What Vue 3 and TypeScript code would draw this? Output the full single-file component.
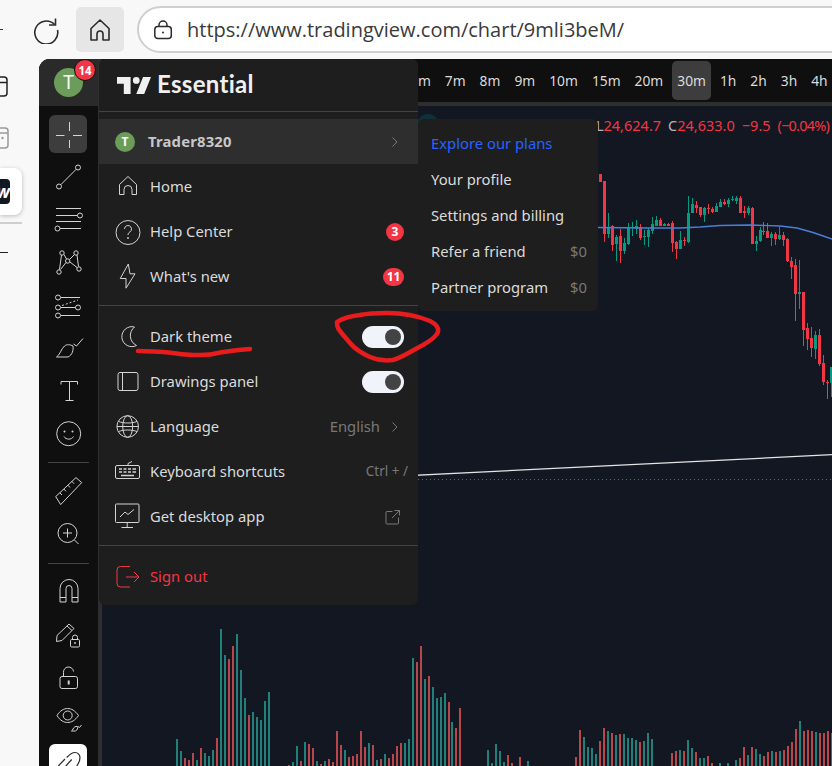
<template>
  <div class="page">
    <!-- Browser bar -->
    <header class="browser-bar">
      <span class="edge-mark"></span>
      <svg class="refresh" width="28" height="28" viewBox="0 0 28 28" fill="none" stroke="#2b2b2b" stroke-width="1.6">
        <path d="M22.500 8.500A11.500 11.500 0 1 0 25.500 14" />
        <path d="M23.500 2.500v6.500H17" />
      </svg>
      <button class="home-btn">
        <svg width="24" height="24" viewBox="0 0 24 24" fill="none" stroke="#2b2b2b" stroke-width="1.6" stroke-linejoin="round">
          <path d="M3 22V10.500L12 2l9 8.500V22h-6v-6a3 3 0 0 0-6 0v6Z" />
        </svg>
      </button>
      <div class="address">
        <svg width="20" height="20" viewBox="0 0 20 20" fill="none" stroke="#2b2b2b" stroke-width="1.5">
          <rect x="1.800" y="6.500" width="16.500" height="12" rx="3" />
          <path d="M6 6.500V5a4 4 0 0 1 8 0v1.500" />
          <circle cx="10" cy="12.500" r="1" fill="#2b2b2b" stroke="none" />
        </svg>
        <span class="url">https://www.tradingview.com/chart/9mli3beM/</span>
      </div>
    </header>

    <div class="workspace">
      <!-- Browser sidebar, cut by the window edge -->
      <aside class="rail">
        <svg class="rail-icon" width="8" height="21" viewBox="0 0 8 21" fill="none" stroke="#222" stroke-width="1.500">
          <path d="M-6 1h10a3 3 0 0 1 3 3v13a3 3 0 0 1-3 3H-6M-6 6.500H7" />
        </svg>
        <svg class="rail-icon second" width="9" height="22" viewBox="0 0 9 22" fill="none" stroke="#999" stroke-width="1.500">
          <path d="M-6 1h11a3 3 0 0 1 3 3v14a3 3 0 0 1-3 3H-6M-6 6h14" />
          <circle cx="2.500" cy="11" r="1.200" fill="#999" stroke="none" />
        </svg>
        <div class="rail-card">
          <span class="rail-tile">w</span>
        </div>
        <span class="rail-line"></span>
        <span class="rail-dash"></span>
      </aside>

      <main class="app">
        <!-- Left drawing toolbar -->
        <div class="tool-col">
          <div class="avatar-cell">
            <div class="avatar">T</div>
            <span class="avatar-badge">14</span>
          </div>
          <nav class="tools">
            <button class="tool active">
              <svg width="38" height="38" viewBox="0 0 38 38" fill="none" stroke="#d4d4d4">
                <path d="M7 20.500h8.500M24 20.500h9M20.500 7v9M20.500 25v8" />
              </svg>
            </button>
            <button class="tool">
              <svg width="38" height="38" viewBox="0 0 38 38" fill="none" stroke="#d4d4d4">
                <circle cx="10" cy="28.500" r="2.500" /><circle cx="29" cy="9.500" r="2.500" />
                <path d="M11.800 26.700 27.200 11.300" />
              </svg>
            </button>
            <button class="tool">
              <svg width="38" height="38" viewBox="0 0 38 38" fill="none" stroke="#d4d4d4">
                <path d="M7 8.500h25M7 15.500h21.500M7 21.500h25M11 28.500h21" />
                <circle cx="31" cy="15.500" r="2.500" /><circle cx="8.500" cy="28.500" r="2.500" />
              </svg>
            </button>
            <button class="tool">
              <svg width="38" height="38" viewBox="0 0 38 38" fill="none" stroke="#d4d4d4">
                <path d="M12.500 12 10.500 26.500M15 11.500l2.500 4.500M25.500 11.500l-5 5M28 12l1.500 11.500M11.500 26.500l5.500-7M28 24.500l-7-5.500" />
                <circle cx="13" cy="10" r="2.200" /><circle cx="27" cy="10" r="2.200" />
                <circle cx="18.700" cy="18" r="2.200" /><circle cx="30" cy="26" r="2.200" /><circle cx="10" cy="29" r="2.200" />
              </svg>
            </button>
            <button class="tool">
              <svg width="38" height="38" viewBox="0 0 38 38" fill="none" stroke="#d4d4d4">
                <circle cx="9" cy="11.500" r="2.500" /><circle cx="9" cy="21.500" r="2.500" />
                <circle cx="29" cy="21.500" r="2.500" /><circle cx="9" cy="29.500" r="2.500" />
                <path d="M12 11.500h19M12 21.500h14.500M12 29.500h19" />
                <path d="M13 19.500 29 14" stroke-dasharray="2 2" />
              </svg>
            </button>
            <button class="tool">
              <svg width="38" height="38" viewBox="0 0 38 38" fill="none" stroke="#d4d4d4" stroke-linejoin="round">
                <path d="M7.500 29C11 27 12 21 15.500 18 18 16 21 16.500 24 18 24.500 22 23.500 27 19 29Z" />
                <path d="M24.500 16l3 2 6.500-7.500" />
              </svg>
            </button>
            <button class="tool">
              <svg width="38" height="38" viewBox="0 0 38 38" fill="none" stroke="#d4d4d4">
                <path d="M12 13.500V10.500H28.500V13.500M20.500 10.500v19M16.500 29.500h8" />
              </svg>
            </button>
            <button class="tool">
              <svg width="38" height="38" viewBox="0 0 38 38" fill="none" stroke="#d4d4d4">
                <circle cx="19.700" cy="19.700" r="12" />
                <path d="M15 22.500c2 3.500 7.500 3.500 9.500 0" />
                <circle cx="15.500" cy="17.500" r="1" fill="#d4d4d4" stroke="none" />
                <circle cx="23.500" cy="17.500" r="1" fill="#d4d4d4" stroke="none" />
              </svg>
            </button>
            <span class="tool-divider"></span>
            <button class="tool">
              <svg width="38" height="38" viewBox="0 0 38 38" fill="none" stroke="#d4d4d4">
                <path d="M6.700 24.600 27 5.600l5.700 5-21 22Z" />
                <path d="M10.800 20.800 13 23M14.800 17l2.200 2.300M18.900 13.200l2.100 2.300M22.900 9.400l2.100 2.300" />
              </svg>
            </button>
            <button class="tool">
              <svg width="38" height="38" viewBox="0 0 38 38" fill="none" stroke="#d4d4d4">
                <circle cx="18.500" cy="18" r="9.500" />
                <path d="M14 18h9M18.500 13.500v9M25.500 25l4 4" />
              </svg>
            </button>
            <span class="tool-divider"></span>
            <button class="tool">
              <svg width="38" height="38" viewBox="0 0 38 38" fill="none" stroke="#d4d4d4">
                <path d="M11 29V15.500a9 9 0 0 1 18 0V29h-6V15.500a3 3 0 0 0-6 0V29ZM11 24.500h6M23 24.500h6" />
              </svg>
            </button>
            <button class="tool">
              <svg width="38" height="38" viewBox="0 0 38 38" fill="none" stroke="#d4d4d4" stroke-linejoin="round">
                <path d="M8 19.500 20 8l5 4.500-12 12-5.500 1ZM18 10l5 4.500" />
                <rect x="21.500" y="23.500" width="9" height="7.500" rx="1.200" />
                <path d="M23.500 23.500v-2a2.500 2.500 0 0 1 5 0v2" />
                <circle cx="26" cy="27" r=".9" fill="#d4d4d4" stroke="none" />
              </svg>
            </button>
            <button class="tool">
              <svg width="38" height="38" viewBox="0 0 38 38" fill="none" stroke="#d4d4d4">
                <rect x="11" y="17.500" width="17.500" height="12" rx="2" />
                <path d="M14.500 17.500v-4a5 5 0 0 1 10-1" />
                <path d="M19.700 21.500v4" stroke-width="2" />
              </svg>
            </button>
            <button class="tool">
              <svg width="38" height="38" viewBox="0 0 38 38" fill="none" stroke="#d4d4d4">
                <path d="M8 14.500C11 9.500 15 7.500 18.700 7.500S26 9.500 29.500 14.500C26 19.500 22.400 21.500 18.700 21.500S11 19.500 8 14.500Z" />
                <circle cx="18.700" cy="14.500" r="4.500" />
                <path d="M22.500 30h4c2-1 2.500-3 2-4.500-2-.5-4 1-4.500 2.500-.3 1-.8 1.500-1.500 2ZM29 25.500l1.500 1 2-2.500" />
              </svg>
            </button>
            <button class="tool pinned">
              <svg width="38" height="38" viewBox="0 0 38 38" fill="none" stroke="#2a2a2a" stroke-width="1.200">
                <path d="M9.300 22 16 15M16 23l6.700-7.500M17.700 13.500C20 11 23 8.500 26 8.500 29 8.500 31 11 31 13.500 31 16 29.500 19.500 27.700 22" />
              </svg>
            </button>
          </nav>
        </div>

        <div class="main-col">
          <!-- Interval bar -->
          <div class="intervals">
            <button v-for="item in intervals" :key="item" class="interval" :class="{ selected: item === '30m' }">
              {{ item }}
            </button>
          </div>

          <!-- Chart -->
          <div class="chart">
            <svg class="chart-canvas" width="730" height="660" viewBox="102 106 730 660">
              <circle cx="428" cy="125" r="11" fill="#0e3036" />
              <rect
                v-for="bar in volumeBars"
                :key="bar.x"
                :x="bar.x"
                :y="bar.y"
                width="2"
                :height="766 - bar.y"
                :fill="bar.up ? '#21807a' : '#b8474b'"
              />
              <line x1="300" y1="481" x2="832" y2="454.700" stroke="#e4e4e4" stroke-width="1.300" />
              <line x1="418" y1="479.500" x2="832" y2="479.500" stroke="#f23645" stroke-dasharray="1 3" opacity=".85" />
              <g v-for="c in candleBars" :key="c.x" :fill="c.color">
                <rect :x="c.x" :y="c.high" width="1" :height="c.low - c.high" />
                <rect :x="c.x - 1" :y="c.top" width="3" :height="c.bottom - c.top" />
              </g>
              <polyline
                points="598,227.500 650,228 680,228 700,227 720,225.500 750,225 780,226 797,228 813,232.500 832,239"
                fill="none"
                stroke="#4a7fd8"
                stroke-width="1.400"
              />
            </svg>
            <div class="legend">
              <span class="label">L</span><span class="value">24,624.7</span>
              <span class="label gap">C</span><span class="value">24,633.0</span>
              <span class="value gap">−9.5</span>
              <span class="value gap tight">(−0.04%)</span>
            </div>
          </div>
        </div>

        <!-- User menu -->
        <div class="menu">
          <div class="menu-header">
            <svg width="34" height="17" viewBox="2 6 30 15" fill="#f0f0f0">
              <path d="M14 6H2v6h6v9h6V6Zm12 15h-7l6-15h7l-6 15Zm-7-9a3 3 0 1 0 0-6 3 3 0 0 0 0 6Z" />
            </svg>
            <span class="plan">Essential</span>
          </div>
          <div class="menu-divider"></div>

          <div class="menu-section first">
            <div class="menu-row user-row">
              <span class="mini-avatar">T</span>
              <span class="row-label user-name">Trader8320</span>
              <svg class="chevron" width="8" height="12" viewBox="0 0 8 12" fill="none" stroke="#787878"><path d="M1.500 1.500 6 6l-4.500 4.500" /></svg>
            </div>
            <div class="menu-row">
              <svg class="row-icon" width="28" height="28" viewBox="0 0 28 28" fill="none" stroke="#d4d4d4">
                <path d="M5.500 21.500V11.500L14 3.500l8.500 8v10H18v-5a4 4 0 0 0-8 0v5Z" />
              </svg>
              <span class="row-label">Home</span>
            </div>
            <div class="menu-row">
              <svg class="row-icon" width="28" height="28" viewBox="0 0 28 28" fill="none" stroke="#d4d4d4">
                <circle cx="14" cy="14.500" r="12" />
                <path d="M10.500 11a3.500 3.500 0 1 1 5.500 2.900c-1.200.8-2 1.500-2 3.100" />
                <circle cx="14" cy="20" r=".9" fill="#d4d4d4" stroke="none" />
              </svg>
              <span class="row-label">Help Center</span>
              <span class="count round">3</span>
            </div>
            <div class="menu-row">
              <svg class="row-icon" width="28" height="28" viewBox="0 0 28 28" fill="none" stroke="#d4d4d4" stroke-linejoin="round">
                <path d="M14.300 1 6.300 15.500H12v9.700l9-14.400h-5Z" />
              </svg>
              <span class="row-label">What's new</span>
              <span class="count">11</span>
            </div>
          </div>
          <div class="menu-divider"></div>

          <div class="menu-section">
            <div class="menu-row">
              <svg class="row-icon" width="28" height="28" viewBox="0 0 28 28" fill="none" stroke="#d4d4d4">
                <path d="M20.500 4a10 10 0 1 0 2 18.500A11 11 0 0 1 20.500 4Z" />
              </svg>
              <span class="row-label">Dark theme</span>
              <span class="toggle"><span class="knob"></span></span>
            </div>
            <div class="menu-row">
              <svg class="row-icon" width="28" height="28" viewBox="0 0 28 28" fill="none" stroke="#d4d4d4">
                <rect x="4" y="4.500" width="20" height="18" rx="2" />
                <path d="M8.500 4.500v18" />
              </svg>
              <span class="row-label">Drawings panel</span>
              <span class="toggle"><span class="knob"></span></span>
            </div>
            <div class="menu-row">
              <svg class="row-icon" width="28" height="28" viewBox="0 0 28 28" fill="none" stroke="#d4d4d4">
                <circle cx="13.700" cy="13.500" r="10.800" />
                <ellipse cx="13.700" cy="13.500" rx="5" ry="10.800" />
                <path d="M4.500 8.500c5.500 2 13 2 18.500 0M4.500 18.500c5.500-2 13-2 18.500 0M3 13.500h21.500" />
              </svg>
              <span class="row-label">Language</span>
              <span class="row-label hint push">English</span>
              <svg class="chevron lang" width="8" height="12" viewBox="0 0 8 12" fill="none" stroke="#787878"><path d="M1.500 1.500 6 6l-4.500 4.500" /></svg>
            </div>
            <div class="menu-row">
              <svg class="row-icon" width="28" height="28" viewBox="0 0 28 28" fill="none" stroke="#d4d4d4">
                <rect x="1.500" y="7.500" width="24" height="13" rx="1.500" />
                <path d="M14 7.500V5.500l4-2" />
                <path d="M5 11h3M9.500 11h3M14 11h3M18.500 11h3.500M5 14h3M9.500 14h3M14 14h3M18.500 14h3.500M7 17.500h13" stroke-width="1.500" />
              </svg>
              <span class="row-label">Keyboard shortcuts</span>
              <span class="row-label hint push shortcut">Ctrl + /</span>
            </div>
            <div class="menu-row">
              <svg class="row-icon" width="28" height="28" viewBox="0 0 28 28" fill="none" stroke="#d4d4d4">
                <rect x="1.500" y="1" width="23.500" height="18.500" rx="1" />
                <path d="M6 14l5-5 3 2.500 6-5M13.200 19.500v5M7.500 24.500h11.500" />
              </svg>
              <span class="row-label">Get desktop app</span>
              <svg class="external" width="16" height="16" viewBox="0 0 16 16" fill="none" stroke="#787878">
                <path d="M7.500 2.500H2a1 1 0 0 0-1 1V14a1 1 0 0 0 1 1h10.500a1 1 0 0 0 1-1V8.500M7 9l7.500-7.500M9.500 1.500h5v5" />
              </svg>
            </div>
          </div>
          <div class="menu-divider"></div>

          <div class="menu-section">
            <div class="menu-row sign-out">
              <svg class="row-icon" width="28" height="28" viewBox="0 0 28 28" fill="none" stroke="#f23645">
                <path d="M16 3.500H6.500a3.500 3.500 0 0 0-3.500 3.500v13.500a3.500 3.500 0 0 0 3.500 3.500H16M12 14h13M20 9l5 5-5 5" />
              </svg>
              <span class="row-label">Sign out</span>
            </div>
          </div>
        </div>

        <!-- Profile submenu -->
        <ul class="submenu">
          <li class="explore">Explore our plans</li>
          <li>Your profile</li>
          <li>Settings and billing</li>
          <li>Refer a friend<span class="amount">$0</span></li>
          <li>Partner program<span class="amount">$0</span></li>
        </ul>

        <!-- Red marker scribbles on top of the screenshot -->
        <svg class="scribble" width="793" height="707" viewBox="39 59 793 707" fill="none" stroke="#e81c1c" stroke-width="4.500" stroke-linecap="round" stroke-linejoin="round">
          <path d="M138 351C150 351 156 352 163 352C175 353 184 355 193 355C203 355 208 355 213 354C226 351 238 350 250 349" />
          <path d="M337 322C343 318 352 316 360 315C370 313 378 313 387 313C403 313 418 316 430 321C436 324 439 328 438 332C436 337 430 341 423 345C413 350 403 357 393 360C385 361 377 360 370 357C361 353 355 349 350 343C345 337 341 333 338 328C337 326 337 324 337 322Z" />
        </svg>
      </main>
    </div>
  </div>
</template>

<script setup lang="ts">
defineOptions({
  name: 'TradingViewUserMenu',
})

const intervals = ['5m', '7m', '8m', '9m', '10m', '15m', '20m', '30m', '1h', '2h', '3h', '4h']

// top, bottom, wick high, wick low, direction
type Candle = [number, number, number, number, 'r' | 'g']

const candles: Candle[] = [
  [174, 182, 174, 182, 'r'], [181, 234, 181, 242, 'r'], [227, 234, 213, 238, 'g'], [226, 245, 225, 251, 'r'],
  [237, 244, 235, 261, 'g'], [236, 251, 229, 263, 'r'], [243, 251, 238, 254, 'g'], [228, 244, 223, 245, 'g'],
  [227, 228, 222, 236, 'g'], [226, 229, 220, 234, 'g'], [227, 238, 224, 240, 'r'], [236, 237, 230, 245, 'g'],
  [230, 237, 228, 247, 'g'], [224, 231, 217, 234, 'g'], [220, 226, 216, 226, 'g'], [220, 226, 218, 226, 'r'],
  [224, 226, 223, 226, 'g'], [224, 226, 223, 226, 'r'], [223, 243, 221, 252, 'r'], [242, 249, 241, 259, 'r'],
  [240, 249, 231, 249, 'g'], [240, 241, 237, 246, 'r'], [213, 242, 196, 243, 'g'], [204, 213, 198, 213, 'g'],
  [205, 208, 201, 213, 'r'], [207, 215, 207, 217, 'r'], [208, 215, 207, 222, 'g'], [208, 209, 204, 214, 'r'],
  [209, 212, 207, 213, 'r'], [206, 212, 203, 212, 'g'], [202, 207, 199, 207, 'g'], [202, 204, 199, 205, 'r'],
  [200, 204, 198, 207, 'g'], [199, 200, 196, 201, 'g'], [198, 201, 196, 204, 'g'], [198, 213, 196, 213, 'r'],
  [211, 213, 206, 218, 'r'], [208, 213, 206, 215, 'g'], [208, 244, 207, 244, 'r'], [241, 244, 236, 251, 'g'],
  [230, 241, 227, 242, 'g'], [231, 232, 222, 235, 'r'], [231, 238, 223, 238, 'r'], [234, 238, 232, 246, 'g'],
  [234, 239, 232, 245, 'r'], [235, 239, 227, 240, 'g'], [235, 240, 232, 246, 'r'], [239, 261, 238, 262, 'r'],
  [261, 267, 257, 279, 'r'], [265, 294, 259, 321, 'r'], [292, 294, 260, 309, 'g'], [292, 330, 292, 346, 'r'],
  [328, 339, 323, 350, 'r'], [338, 348, 327, 357, 'r'], [335, 349, 331, 359, 'g'], [335, 364, 329, 366, 'r'],
  [363, 382, 355, 385, 'r'], [382, 383, 380, 399, 'r'], [367, 383, 367, 397, 'g'],
]

const candleBars = candles.map(([top, bottom, high, low, dir], i) => ({
  x: Math.round(600.3 + 3.98 * i),
  top,
  bottom,
  high,
  low,
  color: dir === 'r' ? '#f23645' : '#089981',
}))

// Volume clusters: start x, then bar tops every 4px ('-' leaves a gap)
const volumeClusters: [number, string][] = [
  [177, 'g739 g751 r758 r760 r753 g760 r748 g753 g756 g750 r738 g629 g655 r659 r646 g634 g670 g698 r715 g712 g717 g720 g701 g692'],
  [289, 'r765 g762 g746 r761 g742 r744 r748 g761 r764 g761 r759 r762 r731 r745 g750 r757 r756 r754 r731 r747 g743 r745 g760 r759 g754 r758 r754 r746 r743 g743 g739 g658 r662 r646 g679 r676 g687 g698 g697 g693 r702'],
  [452, 'g722 r728 r708'],
  [488, 'g750 g763 g744 g751 g762 r755 r763 - r757 - g761'],
  [576, 'r757 r730 g737 g747 g748 g754 r741 r728 g731 r733 g735 r734 g734 g738 g738 g740 r742 g741 g733 g739'],
  [672, 'r753 r751 g750 r751 g740 g748 r752 g758 g758 r756 r763 - g763 - g763 - g760 r758 r747 g755 r747 g749 g754 r756 r752 g751 r752 g751 r750 r746 r742 r729 g721 r731 r730 r731 g732 r733 r733 r731 g733'],
]

const volumeBars = volumeClusters.flatMap(([start, tops]) =>
  tops.split(' ').flatMap((item, i) =>
    item === '-' ? [] : [{ x: start - 1 + i * 4, y: Number(item.slice(1)), up: item[0] === 'g' }],
  ),
)
</script>

<style>
html,
body {
  margin: 0;
  background: #f8f8f8;
}
</style>

<style scoped>
.page {
  width: 832px;
  height: 766px;
  overflow: hidden;
  display: flex;
  flex-direction: column;
  background: #f8f8f8;
  font-family: 'Noto Sans', sans-serif;
}

.browser-bar {
  height: 59px;
  flex-shrink: 0;
  display: flex;
  align-items: center;
}

.edge-mark {
  width: 3px;
  height: 1px;
  background: #333;
}

.refresh {
  margin-left: 29px;
}

.home-btn {
  width: 48px;
  height: 45px;
  margin-left: 16px;
  padding: 0;
  border: none;
  border-radius: 5px;
  background: #e6e6e6;
  display: flex;
  align-items: center;
  justify-content: center;
}

.address {
  flex: 1;
  height: 47px;
  box-sizing: border-box;
  margin: 0 -30px 0 13px;
  padding-left: 14px;
  display: flex;
  align-items: center;
  gap: 14px;
  background: #fff;
  border: 2px solid #cfcfcf;
  border-radius: 24px;
}

.url {
  font-family: 'Open Sans', sans-serif;
  font-size: 20px;
  color: #3a3a3a;
  white-space: nowrap;
}

.workspace {
  flex: 1;
  display: flex;
  min-height: 0;
}

.rail {
  width: 39px;
  flex-shrink: 0;
  display: flex;
  flex-direction: column;
  align-items: flex-start;
}

.rail-icon {
  display: block;
  margin-top: 17px;
}

.rail-icon.second {
  margin-top: 30px;
}

.rail-card {
  width: 22px;
  height: 47px;
  margin-top: 19px;
  display: flex;
  align-items: center;
  background: #fff;
  border-radius: 0 8px 8px 0;
  box-shadow: 0 1px 4px rgba(0, 0, 0, 0.25);
}

.rail-tile {
  width: 10px;
  height: 25px;
  overflow: hidden;
  display: flex;
  align-items: center;
  justify-content: flex-end;
  background: #131722;
  border-radius: 0 4px 4px 0;
  color: #fff;
  font-size: 17px;
  font-weight: 700;
  font-style: italic;
}

.rail-line {
  width: 22px;
  height: 2px;
  margin-top: 7px;
  background: #cfcfcf;
}

.rail-dash {
  width: 8px;
  height: 1px;
  margin-top: 28px;
  background: #222;
}

.app {
  position: relative;
  flex: 1;
  min-width: 0;
  display: flex;
  gap: 4px;
  overflow: hidden;
  background: #2e2e2e;
  border-radius: 11px 0 0 0;
}

.tool-col {
  width: 59px;
  flex-shrink: 0;
  display: flex;
  flex-direction: column;
  background: #0f0f0f;
}

.avatar-cell {
  position: relative;
  height: 47px;
  flex-shrink: 0;
  display: flex;
  align-items: center;
  justify-content: center;
  background: #2a2a2a;
}

.avatar {
  width: 29px;
  height: 29px;
  margin-top: -1px;
  border-radius: 50%;
  display: flex;
  align-items: center;
  justify-content: center;
  background: #6b9c5a;
  color: #fff;
  font-size: 19px;
}

.avatar-badge {
  position: absolute;
  top: 0;
  left: 35px;
  width: 20px;
  height: 20px;
  border: 1.500px solid #111;
  border-radius: 50%;
  display: flex;
  align-items: center;
  justify-content: center;
  background: #f23645;
  color: #fff;
  font-size: 11.500px;
  font-weight: 700;
}

.tools {
  display: flex;
  flex-direction: column;
  align-items: flex-start;
  gap: 4.700px;
  padding: 9px 0 0 10px;
}

.tool {
  width: 38px;
  height: 38px;
  flex-shrink: 0;
  padding: 0;
  border: none;
  border-radius: 6px;
  background: transparent;
}

.tool svg {
  display: block;
}

.tool.active {
  background: #3d3d3d;
}

.tool.pinned {
  background: #fff;
}

.tool-divider {
  width: 41px;
  height: 1px;
  flex-shrink: 0;
  margin: 5px 0 5px -1px;
  background: #434343;
}

.main-col {
  flex: 1;
  min-width: 0;
  display: flex;
  flex-direction: column;
  gap: 4px;
}

.intervals {
  height: 43px;
  flex-shrink: 0;
  display: flex;
  align-items: center;
  gap: 4px;
  padding-left: 303px;
  overflow: hidden;
  background: #0f0f0f;
}

.interval {
  height: 39px;
  padding: 0 5px;
  border: none;
  border-radius: 5px;
  background: transparent;
  color: #dbdbdb;
  font-family: inherit;
  font-size: 13.800px;
  white-space: nowrap;
}

.interval.selected {
  background: #3d3d3d;
}

.chart {
  position: relative;
  flex: 1;
  min-height: 0;
  background: #131722;
}

.chart-canvas {
  display: block;
}

.legend {
  position: absolute;
  top: 8px;
  right: 3px;
  display: flex;
  font-size: 14.500px;
  line-height: 22px;
  white-space: nowrap;
}

.legend .label {
  color: #b2b5be;
}

.legend .value {
  color: #f23645;
}

.legend .gap {
  margin-left: 7px;
}

.legend .tight {
  letter-spacing: -0.8px;
}

.menu {
  position: absolute;
  top: 0;
  left: 60px;
  width: 319px;
  height: 546px;
  background: #1e1e1e;
  border-radius: 6px;
  color: #dbdbdb;
  font-size: 14.800px;
}

.menu-header {
  height: 52px;
  padding-left: 18px;
  display: flex;
  align-items: center;
  gap: 6px;
}

.plan {
  margin-top: -3px;
  font-family: 'Lato', sans-serif;
  font-size: 24px;
  font-weight: 700;
  color: #f0f0f0;
  letter-spacing: 0.3px;
}

.menu-divider {
  height: 1px;
  background: #434343;
}

.menu-section {
  padding: 8px 0 6px;
}

.menu-section.first {
  padding-top: 7px;
}

.menu-row {
  height: 45px;
  padding: 0 14px 0 15px;
  display: flex;
  align-items: center;
  gap: 8px;
  white-space: nowrap;
}

.row-label {
  padding-bottom: 2px;
}

.row-icon {
  flex-shrink: 0;
}

.user-row {
  padding-left: 16px;
  gap: 13px;
  background: #2e2e2e;
}

.mini-avatar {
  width: 20px;
  height: 20px;
  border-radius: 50%;
  display: flex;
  align-items: center;
  justify-content: center;
  background: #6b9c5a;
  color: #fff;
  font-size: 12px;
  font-weight: 700;
}

.user-name {
  font-weight: 700;
  color: #c8c8c8;
  letter-spacing: 0.2px;
}

.chevron {
  margin-left: auto;
  margin-right: 5px;
}

.chevron.lang {
  margin-left: 3px;
}

.count {
  min-width: 21px;
  height: 18px;
  margin-left: auto;
  border-radius: 9px;
  display: flex;
  align-items: center;
  justify-content: center;
  background: #f23645;
  color: #fff;
  font-size: 12px;
  font-weight: 700;
}

.count.round {
  min-width: 18px;
}

.toggle {
  width: 42px;
  height: 22px;
  margin-left: auto;
  display: flex;
  align-items: center;
  justify-content: flex-end;
  padding-right: 3px;
  box-sizing: border-box;
  border-radius: 11px;
  background: #f0f3fa;
}

.knob {
  width: 16px;
  height: 16px;
  border-radius: 50%;
  background: #434343;
}

.hint {
  color: #787878;
}

.push {
  margin-left: auto;
}

.shortcut {
  margin-right: -4px;
  font-size: 13.500px;
}

.external {
  margin-left: auto;
  margin-right: 3px;
}

.sign-out {
  color: #f23645;
}

.submenu {
  position: absolute;
  top: 60px;
  left: 379px;
  width: 180px;
  box-sizing: border-box;
  margin: 0;
  padding: 6px 0;
  list-style: none;
  background: #1e1e1e;
  border-radius: 6px;
  color: #dbdbdb;
  font-size: 14.800px;
}

.submenu li {
  height: 36px;
  padding: 0 11px 0 13px;
  display: flex;
  align-items: center;
  justify-content: space-between;
  white-space: nowrap;
}

.submenu .explore {
  color: #2962ff;
}

.amount {
  color: #787878;
}

.scribble {
  position: absolute;
  top: 0;
  left: 0;
  pointer-events: none;
}
</style>
